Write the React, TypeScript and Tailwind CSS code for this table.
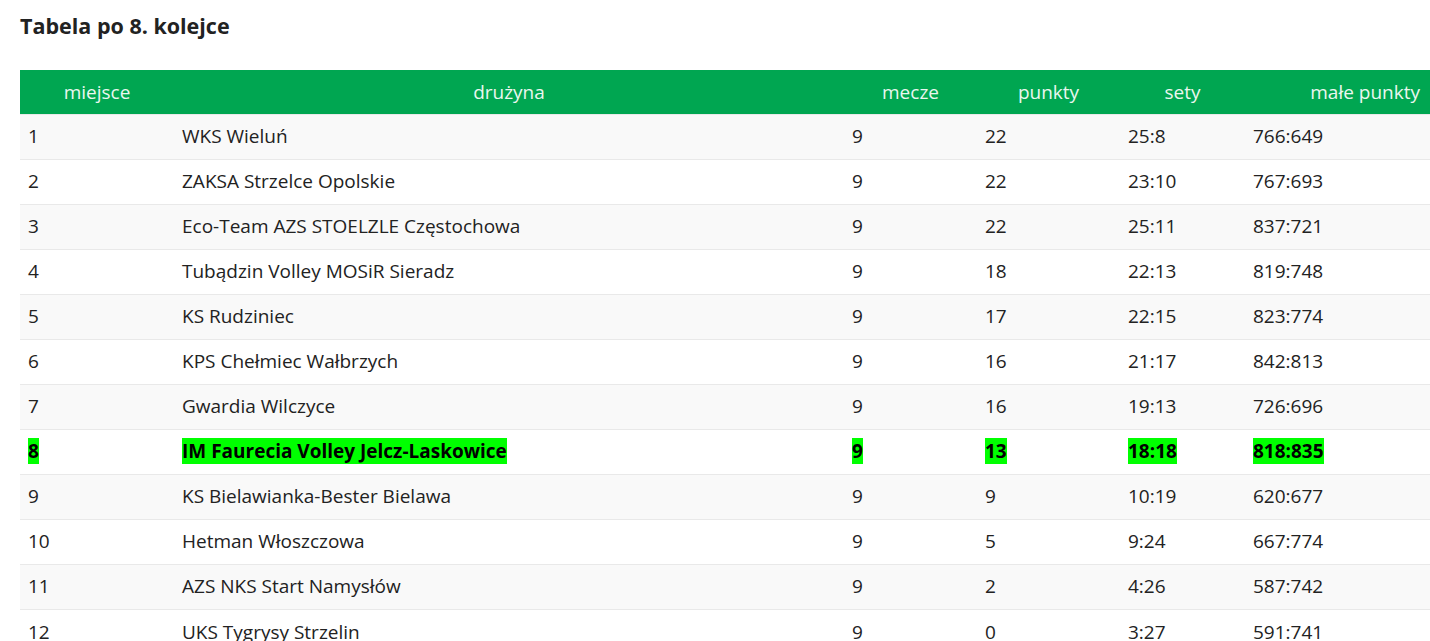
import React from "react";

const rows: [string, string, string, string, string, string][] = [
  ["1", "WKS Wieluń", "9", "22", "25:8", "766:649"],
  ["2", "ZAKSA Strzelce Opolskie", "9", "22", "23:10", "767:693"],
  ["3", "Eco-Team AZS STOELZLE Częstochowa", "9", "22", "25:11", "837:721"],
  ["4", "Tubądzin Volley MOSiR Sieradz", "9", "18", "22:13", "819:748"],
  ["5", "KS Rudziniec", "9", "17", "22:15", "823:774"],
  ["6", "KPS Chełmiec Wałbrzych", "9", "16", "21:17", "842:813"],
  ["7", "Gwardia Wilczyce", "9", "16", "19:13", "726:696"],
  ["8", "IM Faurecia Volley Jelcz-Laskowice", "9", "13", "18:18", "818:835"],
  ["9", "KS Bielawianka-Bester Bielawa", "9", "9", "10:19", "620:677"],
  ["10", "Hetman Włoszczowa", "9", "5", "9:24", "667:774"],
  ["11", "AZS NKS Start Namysłów", "9", "2", "4:26", "587:742"],
  ["12", "UKS Tygrysy Strzelin", "9", "0", "3:27", "591:741"],
];

export default function App() {
  return (
    <div
      className="h-[641px] overflow-hidden bg-white pl-5 text-[#222]"
      style={{ fontFamily: '"Open Sans", "Noto Sans", sans-serif' }}
    >
      <h2 className="pt-[12px] text-[21.5px] font-bold leading-[28px] text-[#222]">Tabela po 8. kolejce</h2>
      <table className="mt-[30px] w-[1410px] table-fixed border-collapse text-[19px]">
        <colgroup>
          <col className="w-[154px]" />
          <col className="w-[670px]" />
          <col className="w-[133px]" />
          <col className="w-[143px]" />
          <col className="w-[125px]" />
          <col />
        </colgroup>
        <thead>
          <tr className="h-[44px] bg-[#00a651] text-[#eaf7ef]">
            <th className="px-2 text-center font-normal">miejsce</th>
            <th className="px-2 text-center font-normal">drużyna</th>
            <th className="px-2 text-center font-normal">mecze</th>
            <th className="px-2 text-center font-normal">punkty</th>
            <th className="px-2 text-center font-normal">sety</th>
            <th className="pr-[10px] text-right font-normal">małe punkty</th>
          </tr>
        </thead>
        <tbody>
          {rows.map((r, i) => {
            const hl = r[0] === "8";
            return (
              <tr
                key={r[0]}
                className={`h-[45px] border-t border-[#e9e9e9] ${i % 2 === 0 ? "bg-[#f9f9f9]" : "bg-white"}`}
              >
                {r.map((c, j) => (
                  <td key={j} className="px-2 align-middle">
                    {hl ? <span className="bg-[#00ff00] font-bold text-black">{c}</span> : c}
                  </td>
                ))}
              </tr>
            );
          })}
        </tbody>
      </table>
    </div>
  );
}
